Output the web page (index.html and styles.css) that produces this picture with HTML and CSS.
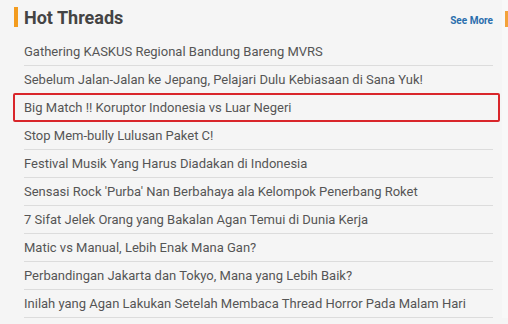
FILE: index.html
```html
<!DOCTYPE html>
<html lang="en">
<head>
    <meta charset="UTF-8">
    <title>Hot Threads</title>
    <link rel="stylesheet" href="styles.css">
</head>
<body>

<div class="page">
    <div class="hot-threads">
        <div class="header">
            <h2>Hot Threads</h2>
            <a href="#" class="see-more">See More</a>
        </div>
        <ul class="thread-list">
            <li><a href="#">Gathering KASKUS Regional Bandung Bareng MVRS</a></li>
            <li><a href="#">Sebelum Jalan-Jalan ke Jepang, Pelajari Dulu Kebiasaan di Sana Yuk!</a></li>
            <li class="selected"><a href="#">Big Match !! Koruptor Indonesia vs Luar Negeri</a></li>
            <li><a href="#">Stop Mem-bully Lulusan Paket C!</a></li>
            <li><a href="#">Festival Musik Yang Harus Diadakan di Indonesia</a></li>
            <li><a href="#">Sensasi Rock 'Purba' Nan Berbahaya ala Kelompok Penerbang Roket</a></li>
            <li><a href="#">7 Sifat Jelek Orang yang Bakalan Agan Temui di Dunia Kerja</a></li>
            <li><a href="#">Matic vs Manual, Lebih Enak Mana Gan?</a></li>
            <li><a href="#">Perbandingan Jakarta dan Tokyo, Mana yang Lebih Baik?</a></li>
            <li><a href="#">Inilah yang Agan Lakukan Setelah Membaca Thread Horror Pada Malam Hari</a></li>
        </ul>
    </div>
    <div class="next-col"></div>
</div>

</body>
</html>
```

FILE: styles.css
```css
body {
    margin: 0;
    background-color: #f5f5f5;
    font-family: Roboto, "Liberation Sans", Arial, sans-serif;
    overflow: hidden;
}
.page {
    display: flex;
    width: 508px;
}
.hot-threads {
    width: 469px;
    padding-left: 24px;
    padding-right: 9px;
}
.next-col {
    width: 6px;
    flex: none;
    background-color: #f8f8f8;
    position: relative;
}
.next-col::before {
    content: "";
    position: absolute;
    left: 3px;
    top: 11px;
    width: 3px;
    height: 16px;
    background-color: #f3a23a;
}
.header {
    display: flex;
    justify-content: space-between;
    align-items: baseline;
    height: 38px;
    box-sizing: border-box;
    padding-top: 7px;
}
.header h2 {
    position: relative;
    margin: 0;
    font-size: 18px;
    line-height: 21px;
    font-weight: bold;
    color: #444;
}
.header h2::before {
    content: "";
    position: absolute;
    left: -10px;
    top: 0;
    width: 4px;
    height: 20px;
    background-color: #f39c1f;
}
.see-more {
    font-size: 10px;
    font-weight: bold;
    color: #2a6ead;
    text-decoration: none;
}
.thread-list {
    list-style: none;
    margin: 0;
    padding: 0;
}
.thread-list li {
    position: relative;
    height: 27px;
    border-bottom: 1px solid #dcdcdc;
    display: flex;
    align-items: center;
}
.thread-list li a {
    font-size: 13px;
    color: #555;
    text-decoration: none;
}
.thread-list li.selected::after {
    content: "";
    position: absolute;
    left: -11px;
    right: -7px;
    top: -1px;
    bottom: -1px;
    border: 2px solid #d9262b;
    border-radius: 2px;
}
```
